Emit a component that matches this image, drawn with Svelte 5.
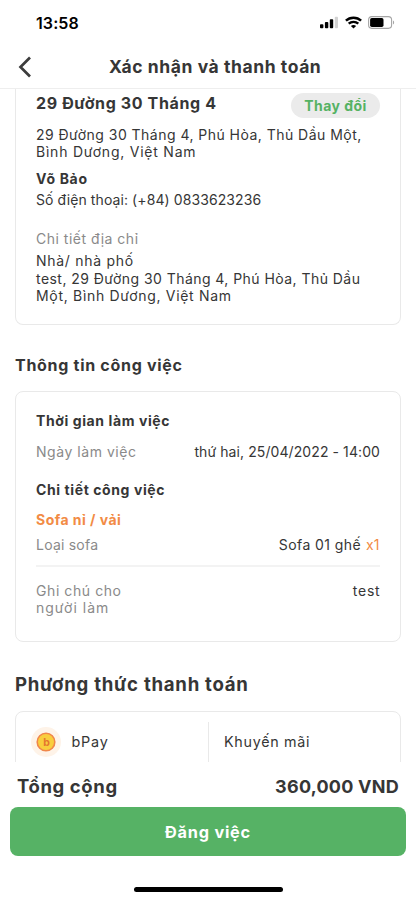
<script>
  const addressLines = [
    { text: '29 Đường 30 Tháng 4, Phú Hòa, Thủ Dầu Một,', ls: 0.466 },
    { text: 'Bình Dương, Việt Nam', ls: 0.77 }
  ];
  const detailLines = [
    { text: 'Nhà/ nhà phố', ls: 0.71 },
    { text: 'test, 29 Đường 30 Tháng 4, Phú Hòa, Thủ Dầu', ls: 0.45 },
    { text: 'Một, Bình Dương, Việt Nam', ls: 0.69 }
  ];
</script>

<div class="screen">
  <div class="status">
    <span class="clock">13:58</span>
    <div class="indicators">
      <svg width="18" height="13" viewBox="0 0 18 13">
        <rect x="0" y="8.2" width="3.4" height="4" rx="0.9" />
        <rect x="4.9" y="6" width="3.4" height="6.2" rx="0.9" />
        <rect x="9.8" y="3.2" width="3.4" height="9" rx="0.9" />
        <rect x="14.8" y="0.8" width="3.2" height="11.4" rx="0.9" fill="#d2d2d2" />
      </svg>
      <svg class="wifi" width="17" height="13" viewBox="0 0 17 13" fill="none" stroke="#000" stroke-width="2.4">
        <path d="M.9 4.7C5 .7 12 .7 16.1 4.7" />
        <path d="M3.7 7.7c2.7-2.5 6.9-2.5 9.6 0" />
        <path d="M8.5 12.5 5.9 9.9c1.5-1.3 3.7-1.3 5.2 0Z" fill="#000" stroke="none" />
      </svg>
      <svg class="battery" width="27" height="13" viewBox="0 0 27 13">
        <rect x="0.6" y="0.6" width="23" height="11.8" rx="3.3" fill="#fff" stroke="#a5a5a5" stroke-width="1.1" />
        <rect x="2.1" y="2.1" width="13.4" height="8.8" rx="1.7" />
        <path d="M25 4.5c1.5.5 1.5 3.5 0 4Z" fill="#a5a5a5" />
      </svg>
    </div>
  </div>

  <header>
    <svg class="back" width="14" height="22" viewBox="0 0 14 22" fill="none" stroke="#3c3c3c" stroke-width="2.7">
      <path d="M12 1.5 2.5 11 12 20.5" />
    </svg>
    <h1>Xác nhận và thanh toán</h1>
  </header>

  <main>
    <section class="card place">
      <div class="top">
        <h2>29 Đường 30 Tháng 4</h2>
        <button class="change">Thay đổi</button>
      </div>
      <div class="lines address">
        {#each addressLines as line}
          <div style="letter-spacing: {line.ls}px">{line.text}</div>
        {/each}
      </div>
      <div class="row bold name">Võ Bảo</div>
      <div class="row phone">Số điện thoại: (+84) 0833623236</div>
      <div class="row muted caption">Chi tiết địa chỉ</div>
      <div class="lines">
        {#each detailLines as line}
          <div style="letter-spacing: {line.ls}px">{line.text}</div>
        {/each}
      </div>
    </section>

    <h2 class="job-title">Thông tin công việc</h2>
    <section class="card job">
      <div class="row bold">Thời gian làm việc</div>
      <div class="row day">
        <span class="muted">Ngày làm việc</span>
        <span class="date">thứ hai, 25/04/2022 - 14:00</span>
      </div>
      <div class="row bold details">Chi tiết công việc</div>
      <div class="row bold accent fabric">Sofa nỉ / vải</div>
      <div class="row kind">
        <span class="muted">Loại sofa</span>
        <span class="qty"><span class="item">Sofa 01 ghế</span><span class="accent">x1</span></span>
      </div>
      <hr />
      <div class="note">
        <div class="lines muted">
          <div class="n1">Ghi chú cho</div>
          <div class="n2">người làm</div>
        </div>
        <span class="value">test</span>
      </div>
    </section>

    <h2 class="pay-title">Phương thức thanh toán</h2>
    <section class="card pay">
      <div class="method">
        <svg width="30" height="30" viewBox="0 0 30 30">
          <circle cx="15" cy="15" r="15" fill="#fef3e8" />
          <circle cx="15" cy="15" r="8.8" fill="#f9ce3e" stroke="#f0874a" stroke-width="1.6" />
          <text x="15.5" y="18.6" text-anchor="middle" font-size="10.5" font-weight="700" letter-spacing="0" fill="#e5772f">b</text>
        </svg>
        <span>bPay</span>
      </div>
      <div class="promo">Khuyến mãi</div>
    </section>
  </main>

  <footer>
    <div class="total">
      <span class="label">Tổng cộng</span>
      <span class="sum">360,000 VND</span>
    </div>
    <button class="submit">Đăng việc</button>
    <div class="home"></div>
  </footer>
</div>

<style>
  :global(body) {
    margin: 0;
    background: #fff;
  }
  .screen {
    width: 416px;
    height: 900px;
    display: flex;
    flex-direction: column;
    overflow: hidden;
    background: #fff;
    color: #363636;
    font-family: Inter, 'Open Sans', sans-serif;
    font-size: 14px;
    white-space: nowrap;
  }
  .screen * {
    box-sizing: border-box;
  }
  h1, h2 {
    margin: 0;
    font-weight: 700;
  }
  button {
    border: 0;
    padding: 0;
    font-family: inherit;
    font-weight: 700;
  }
  svg {
    display: block;
    flex: none;
  }
  .status {
    flex: none;
    height: 45px;
    padding: 0 21px 0 36px;
    display: flex;
    justify-content: space-between;
    align-items: center;
  }
  .clock {
    font-size: 16px;
    font-weight: 600;
    letter-spacing: 0.1px;
    color: #000;
  }
  .indicators {
    display: flex;
    align-items: center;
  }
  .wifi {
    margin-left: 7px;
  }
  .battery {
    margin-left: 6px;
  }
  header {
    flex: none;
    height: 44px;
    border-bottom: 1px solid #eee;
    padding: 0 18px;
    display: flex;
    align-items: center;
  }
  h1 {
    margin-left: 77px;
    font-size: 17.5px;
    line-height: 22px;
    letter-spacing: 0.57px;
  }
  main {
    flex: none;
    height: 673px;
    overflow: hidden;
    padding: 0 15px;
    display: flex;
    flex-direction: column;
  }
  .card {
    flex: none;
    border: 1px solid #e9e9e9;
    border-radius: 8px;
    padding: 20px;
  }
  .place {
    border-top: 0;
    border-radius: 0 0 8px 8px;
    padding-top: 3.6px;
  }
  .top {
    display: flex;
    justify-content: space-between;
    align-items: flex-start;
    height: 25.4px;
  }
  h2 {
    font-size: 16px;
    line-height: 20px;
    letter-spacing: 0.63px;
  }
  .change {
    width: 89px;
    height: 25px;
    margin-top: 0.4px;
    border-radius: 13px;
    background: #ebebeb;
    color: #55b264;
    font-size: 14px;
    letter-spacing: 0.44px;
  }
  .lines > div {
    line-height: 17.2px;
  }
  .address {
    margin-top: 8.2px;
  }
  .row {
    height: 18px;
    line-height: 18px;
    display: flex;
    justify-content: space-between;
  }
  .bold {
    font-weight: 700;
    letter-spacing: 0.6px;
  }
  .muted {
    color: #8a8a8a;
    letter-spacing: 0.54px;
  }
  .accent {
    color: #f28b45;
  }
  .name {
    margin-top: 9.2px;
    letter-spacing: 0.66px;
  }
  .phone {
    margin-top: 3.2px;
    letter-spacing: 0.09px;
  }
  .caption {
    margin: 21px 0 4.4px;
    letter-spacing: 0.51px;
  }
  .job-title {
    margin: 30.2px 0 15.8px;
    letter-spacing: 0.71px;
  }
  .job {
    padding-bottom: 24.7px;
  }
  .day {
    margin-top: 13px;
  }
  .date {
    letter-spacing: 0.09px;
  }
  .details {
    margin-top: 20px;
  }
  .fabric {
    margin-top: 11.7px;
    letter-spacing: 0.46px;
  }
  .kind {
    margin-top: 7.3px;
  }
  .kind .muted {
    letter-spacing: 0.22px;
  }
  .qty {
    display: flex;
    gap: 5px;
    margin-right: 0.6px;
  }
  .item {
    letter-spacing: 0.42px;
  }
  hr {
    width: 100%;
    height: 2px;
    margin: 11px 0 14.7px;
    border: 0;
    background: #f3f3f3;
  }
  .note {
    display: flex;
    justify-content: space-between;
    line-height: 17.2px;
  }
  .n1 {
    letter-spacing: 0.58px;
  }
  .n2 {
    letter-spacing: 1px;
  }
  .value {
    letter-spacing: 0.8px;
    margin-right: -0.5px;
  }
  .pay-title {
    margin: 31.3px 0 16px;
    font-size: 18.6px;
    line-height: 22px;
    letter-spacing: 0.74px;
  }
  .pay {
    height: 120px;
    padding: 10px 0 0 15px;
    display: flex;
  }
  .method {
    width: 178px;
    height: 110px;
    padding-top: 5px;
    border-right: 1px solid #e9e9e9;
    display: flex;
    align-items: flex-start;
    gap: 10.5px;
    font-size: 14.4px;
    line-height: 30px;
    letter-spacing: 0.8px;
  }
  .promo {
    padding: 5px 0 0 15px;
    font-size: 14.3px;
    line-height: 30px;
    letter-spacing: 0.72px;
  }
  footer {
    flex: 1;
    padding: 13px 10px 0;
    display: flex;
    flex-direction: column;
  }
  .total {
    display: flex;
    justify-content: space-between;
    padding: 0 7px;
    font-size: 18px;
    font-weight: 700;
    line-height: 23px;
  }
  .label {
    font-size: 18.5px;
    letter-spacing: 0.6px;
  }
  .sum {
    letter-spacing: 0.24px;
  }
  .submit {
    height: 48.4px;
    margin-top: 9.4px;
    border-radius: 8px;
    background: #56b265;
    color: #fff;
    font-size: 16.3px;
    letter-spacing: 0.76px;
  }
  .home {
    align-self: center;
    width: 149px;
    height: 5px;
    margin-top: 31px;
    border-radius: 3px;
    background: #000;
  }
</style>
